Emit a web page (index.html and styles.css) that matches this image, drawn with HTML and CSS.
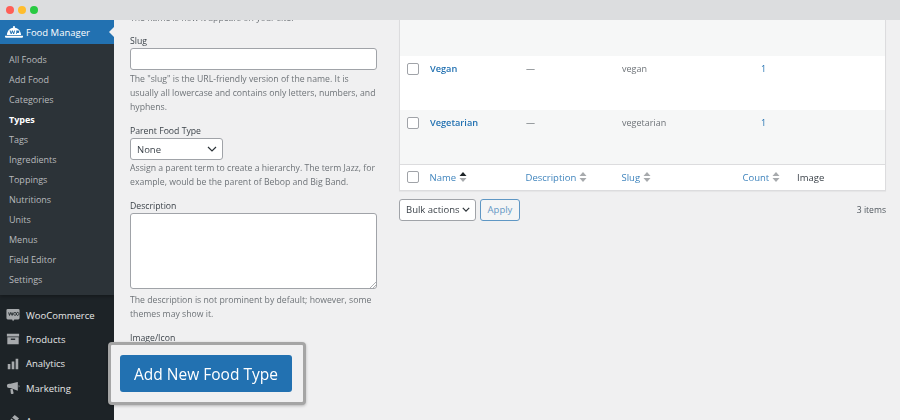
FILE: index.html
```html
<!DOCTYPE html>
<html lang="en">
<head>
<meta charset="utf-8">
<title>Food Types</title>
<link rel="stylesheet" href="styles.css">
</head>
<body>
<div class="app">
  <nav class="sidebar">
    <div class="current">
      <svg class="logo" viewBox="0 0 24 16" width="18" height="12"><path fill="#fff" d="M12 0a1.300 1.300 0 0 1 1 2.200c5 .5 8 4.300 8.500 9.800H2.500C3 6.500 6 2.700 11 2.200A1.300 1.300 0 0 1 12 0zM0 13h24v1.200a1.500 1.500 0 0 1-1.500 1.500h-21A1.500 1.500 0 0 1 0 14.200z"/><path fill="#2271b1" d="M6 6h1.500l.8 3 1-3h1.200l1 3 .8-3h1.200l-1.300 4.500h-1.300l-1-2.500-1 2.500H7.600zM15 6h2.500a1.500 1.500 0 0 1 0 3.200H16v1.300h-1z"/></svg>
      <span>Food Manager</span>
      <i class="notch"></i>
    </div>
    <ul class="submenu">
      <li>All Foods</li><li>Add Food</li><li>Categories</li><li class="active">Types</li><li>Tags</li><li>Ingredients</li><li>Toppings</li><li>Nutritions</li><li>Units</li><li>Menus</li><li>Field Editor</li><li>Settings</li>
    </ul>
    <ul class="mainmenu">
      <li><svg viewBox="0 0 16 16" width="14" height="14"><path fill="#a7aaad" d="M2 1h12a1.500 1.500 0 0 1 1.500 1.500v9A1.500 1.500 0 0 1 14 13H9.500L8 15l-1-2H2A1.500 1.500 0 0 1 .5 11.500v-9A1.500 1.500 0 0 1 2 1z"/><path fill="none" stroke="#1d2327" stroke-width="1" d="M3 5l1 3.500L5.500 5 7 8.500 8 5M10.300 5a1.500 1.700 0 1 0 .01 0M13.300 5a1.500 1.700 0 1 0 .01 0"/></svg>WooCommerce</li>
      <li><svg viewBox="0 0 16 16" width="14" height="14"><path fill="#a7aaad" d="M1 2h14v3H1zM1.500 6h13v8h-13z"/><path fill="#1d2327" d="M5.500 7.500h5V9h-5z"/></svg>Products</li>
      <li><svg viewBox="0 0 16 16" width="14" height="14"><path fill="#a7aaad" d="M2 8h3v6H2zM6.500 5h3v9h-3zM11 2h3v12h-3z"/></svg>Analytics</li>
      <li><svg viewBox="0 0 16 16" width="14" height="14"><path fill="#a7aaad" d="M12 1.500l1.500-.5v10l-1.500-.5-7-2.500H3.500a2.500 2.500 0 0 1 0-5H5zM14.500 4.500a1.700 1.700 0 0 1 0 3zM5 9h2.600l1 4.500a1 1 0 0 1-1 1.300H6.500a1 1 0 0 1-1-.8z"/></svg>Marketing</li>
      <li class="gap-before"><svg viewBox="0 0 16 16" width="14" height="14"><path fill="#a7aaad" d="M10 1l5 4-3 3-5-4zM6 5l4 3-5 7-3-2z"/></svg>Appearance</li>
    </ul>
  </nav>
  <main class="content">
    <section class="form-col">
      <p class="hint cut">The name is how it appears on your site.</p>
      <label class="label label-slug">Slug</label>
      <div class="input"></div>
      <p class="hint">The "slug" is the URL-friendly version of the name. It is usually all lowercase and contains only letters, numbers, and hyphens.</p>
      <label class="label label-parent">Parent Food Type</label>
      <div class="select select-parent">None<svg viewBox="0 0 10 6" width="10" height="6"><path fill="none" stroke="#2c3338" stroke-width="1.200" d="M1 1l4 4 4-4"/></svg></div>
      <p class="hint">Assign a parent term to create a hierarchy. The term Jazz, for example, would be the parent of Bebop and Big Band.</p>
      <label class="label label-desc">Description</label>
      <div class="textarea"><svg viewBox="0 0 6 6" width="6" height="6"><path stroke="#8c8f94" stroke-width=".7" d="M0 6l6-6M3 6l3-3"/></svg></div>
      <p class="hint">The description is not prominent by default; however, some themes may show it.</p>
      <label class="label label-image">Image/Icon</label>
    </section>
    <section class="table-col">
      <div class="table">
        <div class="row row-first alt"><span class="check"></span></div>
        <div class="row row-body"><span class="check"></span><a class="name">Vegan</a><span class="cell">—</span><span class="cell slug">vegan</span><span class="cell count">1</span></div>
        <div class="row row-body alt"><span class="check"></span><a class="name">Vegetarian</a><span class="cell">—</span><span class="cell slug">vegetarian</span><span class="cell count">1</span></div>
        <div class="row row-foot">
          <span class="check"></span>
          <span class="head">Name <svg class="sort" viewBox="0 0 8 12" width="8" height="12"><path fill="#1d2327" d="M4 1l3.500 4h-7z"/><path fill="#a7aaad" d="M4 11l3.500-4h-7z"/></svg></span>
          <span class="head">Description <svg class="sort" viewBox="0 0 8 12" width="8" height="12"><path fill="#a7aaad" d="M4 1l3.500 4h-7zM4 11l3.500-4h-7z"/></svg></span>
          <span class="head">Slug <svg class="sort" viewBox="0 0 8 12" width="8" height="12"><path fill="#a7aaad" d="M4 1l3.500 4h-7zM4 11l3.500-4h-7z"/></svg></span>
          <span class="head">Count <svg class="sort" viewBox="0 0 8 12" width="8" height="12"><path fill="#a7aaad" d="M4 1l3.500 4h-7zM4 11l3.500-4h-7z"/></svg></span>
          <span class="head-plain">Image</span>
        </div>
      </div>
      <div class="actions">
        <div class="select select-bulk">Bulk actions<svg viewBox="0 0 10 6" width="8" height="5"><path fill="none" stroke="#2c3338" stroke-width="1.500" d="M1 1l4 4 4-4"/></svg></div>
        <div class="apply">Apply</div>
        <span class="items">3 items</span>
      </div>
    </section>
  </main>
</div>
<div class="window-bar">
  <span class="dot dot-red"></span><span class="dot dot-yellow"></span><span class="dot dot-green"></span>
</div>
<div class="callout"><button class="primary" type="button">Add New Food Type</button></div>
</body>
</html>
```
FILE: styles.css
```css
* { box-sizing: border-box; }
html, body { margin: 0; height: 420px; overflow: hidden; }
body { font-family: "Open Sans", "Noto Sans", sans-serif; background: #f0f0f1; color: #3c434a; position: relative; padding-top: 20px; }
ul { list-style: none; margin: 0; padding: 0; }
p { margin: 0; }

.window-bar { position: absolute; left: 0; top: 0; width: 100%; height: 20px; background: #dcdddf; display: flex; align-items: center; gap: 4px; padding-left: 6px; }
.dot { width: 8px; height: 8px; border-radius: 50%; }
.dot-red { background: #ff5f57; }
.dot-yellow { background: #ffbd2e; }
.dot-green { background: #28ca42; }

.app { display: flex; height: 400px; filter: blur(.35px); }

.sidebar { width: 114px; flex: none; background: #1d2327; color: #f0f0f1; overflow: hidden; }
.current { height: 24px; background: #2271b1; color: #fff; display: flex; align-items: center; gap: 3px; padding-left: 5px; font-size: 9.500px; position: relative; }
.notch { position: absolute; right: 0; top: 7px; border: 5px solid transparent; border-right-color: #f0f0f1; border-left-width: 0; }
.submenu { background: #2c3338; height: 251px; padding-top: 6px; box-shadow: 0 2px 3px rgba(0,0,0,.25); }
.submenu li { height: 20px; line-height: 20px; padding-left: 9px; font-size: 9px; color: #b8babd; }
.submenu .active { color: #fff; font-weight: 700; }
.mainmenu { padding-top: 8px; }
.mainmenu li { height: 24.300px; display: flex; align-items: center; gap: 6px; padding-left: 6px; font-size: 9.500px; color: #e6e7e8; }
.mainmenu .gap-before { margin-top: 9px; }

.content { flex: 1; display: flex; min-width: 0; }
.form-col { width: 285px; flex: none; padding-left: 16px; margin-top: -9px; font-size: 8.700px; }
.hint { color: #6e7378; line-height: 14.200px; width: 247px; }
.cut { height: 14px; }
.label { display: block; color: #3c434a; line-height: 12px; }
.label-slug { margin-top: 10px; }
.input { width: 247px; height: 22px; margin: 1px 0 2px; background: #fff; border: 1px solid #a0a3a8; border-radius: 3px; }
.label-parent { margin-top: 10px; }
.select { display: flex; align-items: center; justify-content: space-between; background: #fff; border: 1px solid #a0a3a8; border-radius: 3px; color: #3c434a; }
.select-parent { width: 93px; height: 22px; margin: 1.400px 0 1px; padding: 0 5px 0 6px; font-size: 9.500px; }
.label-desc { margin-top: 11px; }
.textarea { width: 247px; height: 76px; margin: .5px 0 4px; background: #fff; border: 1px solid #a0a3a8; border-radius: 3px; display: flex; align-items: flex-end; justify-content: flex-end; }
.label-image { margin-top: 10.500px; }

.table-col { width: 487px; flex: none; }
.table { background: #fff; border: 1px solid #dcdcde; border-top: 0; box-shadow: 0 1px 1px rgba(0,0,0,.04); }
.row { display: grid; grid-template-columns: 30px 96px 96px 121px 54px 1fr; font-size: 9px; }
.alt { background: #f6f7f7; }
.row-first { height: 35.500px; }
.row-first .check { margin-top: -12px; }
.row-body { height: 54px; padding-top: 7px; align-items: start; }
.row-foot { height: 26px; align-items: center; border-top: 1px solid #dcdcde; font-size: 9.500px; background: #fff; }
.check { width: 12px; height: 12px; margin-left: 7px; background: #fff; border: 1px solid #a0a3a8; border-radius: 2px; }
.name { color: #2271b1; font-weight: 600; font-size: 9.200px; line-height: 13px; margin-top: -.5px; }
.cell { line-height: 13px; color: #6e7378; margin-top: -.5px; }
.count { color: #2271b1; padding-left: 18px; }
.head { color: #3f84bd; display: flex; align-items: center; gap: 3px; white-space: nowrap; margin-left: -.5px; }
.head-plain { color: #3c434a; }

.actions { display: flex; align-items: center; margin-top: 8px; font-size: 9.500px; }
.select-bulk { width: 77px; height: 22px; padding: 0 5px 0 6px; }
.apply { width: 40px; height: 22px; margin-left: 4px; display: flex; align-items: center; justify-content: center; color: #2271b1; border: 1px solid #2271b1; border-radius: 3px; background: #f6f7f7; opacity: .7; }
.items { margin-left: auto; font-size: 8.600px; color: #50575e; }

.callout { position: absolute; left: 108px; top: 342px; width: 198px; height: 63px; display: flex; align-items: center; padding-left: 9px; background: #f0f0f1; border: 3px solid #a5a5a5; border-radius: 4px; box-shadow: 0 1px 3px rgba(0,0,0,.25); }
.primary { width: 172px; height: 37px; background: #2271b1; color: #fff; border: 0; border-radius: 3px; font-family: inherit; font-size: 15.500px; font-weight: 500; padding: 0; filter: blur(.35px); }
```
